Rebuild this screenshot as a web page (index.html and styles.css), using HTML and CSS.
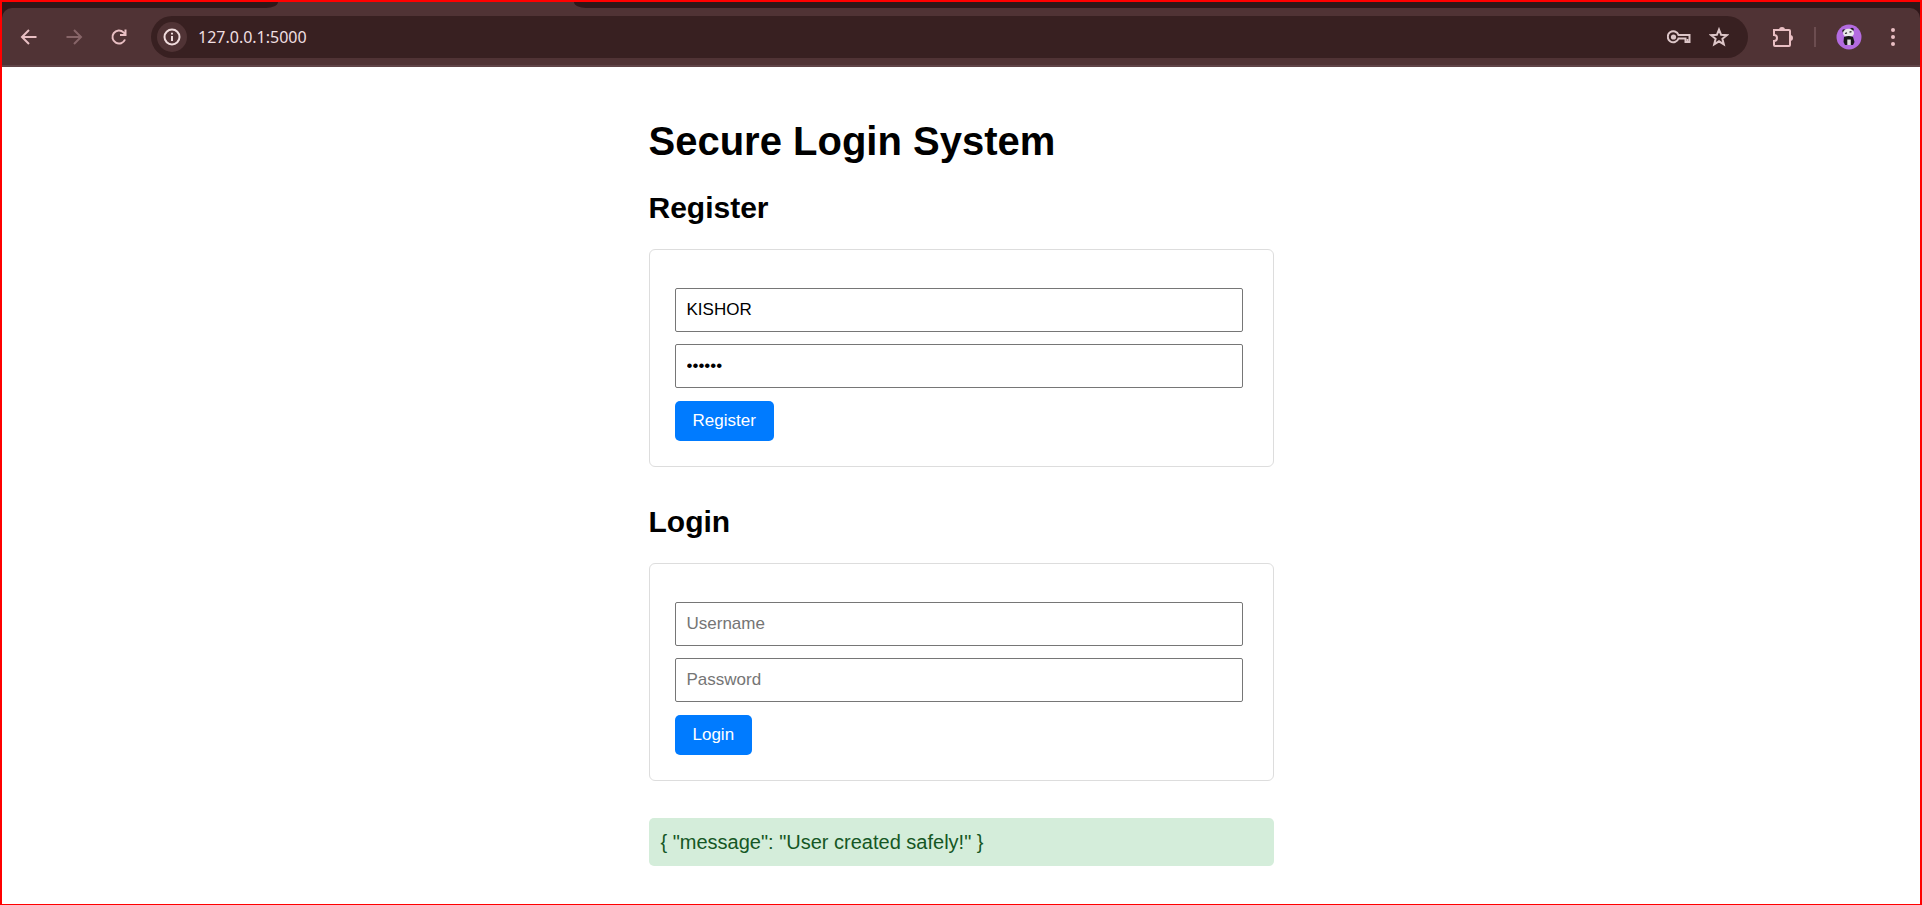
FILE: index.html
```html
<!DOCTYPE html>
<html lang="en">
<head>
<meta charset="utf-8">
<title>Secure Login System</title>
<link rel="stylesheet" href="styles.css">
</head>
<body>
<div class="window">
  <header class="browser">
    <div class="tabstrip">
      <div class="tabs-before"></div>
      <div class="tab-active"></div>
      <div class="tabs-after"></div>
    </div>
    <nav class="toolbar">
      <button class="tool" aria-label="Back"><svg width="18" height="18" viewBox="0 0 18 18"><path d="M16.500 9H2.500M9 2 2 9l7 7"/></svg></button>
      <button class="tool tool-dim" aria-label="Forward"><svg width="18" height="18" viewBox="0 0 18 18"><path d="M1.500 9h14M9 2l7 7-7 7"/></svg></button>
      <button class="tool" aria-label="Reload"><svg width="18" height="18" viewBox="0 0 18 18"><path d="M15 11.500A6.500 6.500 0 1 1 13.500 4.400L15.500 6.400M15.500 1.500V7H10"/></svg></button>
      <div class="omnibox">
        <button class="site-info" aria-label="View site information"><svg width="18" height="18" viewBox="0 0 18 18"><circle cx="9" cy="9" r="7.500"/><path d="M9 8v5M9 4.800v1.800"/></svg></button>
        <input class="url" aria-label="Address" value="127.0.0.1:5000">
        <button class="omni-action" aria-label="Passwords"><svg width="24" height="18" viewBox="0 0 24 18"><path d="M11.500 7H22.500v7h-4v-3.500h-7A5.500 5.500 0 1 1 11.500 7z"/><path d="M20.500 11v3"/><circle class="solid" cx="6.500" cy="9" r="2.600"/></svg></button>
        <button class="omni-action" aria-label="Bookmark"><svg width="20" height="20" viewBox="0 0 20 20"><path d="M10 2.500l2.100 5.300 5.700.4-4.400 3.600 1.400 5.500-4.800-3-4.800 3 1.400-5.500-4.400-3.600 5.700-.4z"/></svg></button>
      </div>
      <button class="tool extensions" aria-label="Extensions"><svg width="22" height="22" viewBox="0 0 22 22"><path d="M2 4h15a1 1 0 0 1 1 1v14a1 1 0 0 1-1 1H3a1 1 0 0 1-1-1v-4a3 3 0 0 0 0-6z"/><path class="solid" d="M7 4a3 3 0 0 1 6 0zM18 9a3 3 0 0 1 0 6z"/></svg></button>
      <span class="divider"></span>
      <button class="avatar" aria-label="Profile"><svg width="26" height="26" viewBox="0 0 26 26"><circle cx="13" cy="13" r="12.500" fill="#b36be0"/><circle cx="8" cy="7" r="1.800" fill="#222"/><circle cx="16" cy="5.500" r="1.800" fill="#222"/><ellipse cx="12.500" cy="9" rx="5.500" ry="4.300" fill="#e9e9e9"/><path d="M9 9.500l2-.700M13.500 8.200l2-.500" stroke="#222" stroke-width="1.300"/><path d="M8 13q5-2 9 0l1.500 5-1.500 3H9l-1.500-3z" fill="#171717"/><path d="M11.300 15.500h3.500V21h-3.500z" fill="#ddd"/></svg></button>
      <button class="tool menu" aria-label="Menu"><svg width="6" height="20" viewBox="0 0 6 20"><g class="solid"><circle cx="3" cy="3" r="2"/><circle cx="3" cy="10" r="2"/><circle cx="3" cy="17" r="2"/></g></svg></button>
    </nav>
  </header>
  <main class="page">
    <h1>Secure Login System</h1>
    <h2>Register</h2>
    <form class="card">
      <input type="text" aria-label="Username" placeholder="Username" value="KISHOR">
      <input type="password" aria-label="Password" placeholder="Password" value="secret">
      <button type="button">Register</button>
    </form>
    <h2>Login</h2>
    <form class="card">
      <input type="text" aria-label="Username" placeholder="Username">
      <input type="password" aria-label="Password" placeholder="Password">
      <button type="button">Login</button>
    </form>
    <div class="message" role="status">{ "message": "User created safely!" }</div>
  </main>
</div>
</body>
</html>
```
FILE: styles.css
```css
* { box-sizing: border-box; }
body { margin: 0; background: #fff; font-family: Arial, "Liberation Sans", sans-serif; }
.window { min-height: 100vh; border: 2px solid #f00; border-bottom-width: 1px; }

.browser { background: #2f1719; border-bottom: 2px solid #604447; }
.tabstrip { display: flex; height: 6px; background: #503335; }
.tabs-before { width: 276px; background: #2f1719; border-bottom-right-radius: 12px 6px; }
.tab-active { width: 296px; }
.tabs-after { flex: 1; background: #2f1719; border-bottom-left-radius: 12px 6px; }
.toolbar { display: flex; align-items: center; height: 57px; padding: 0 17px 0 18px; background: #503335; border-radius: 10px 10px 0 0; }
.browser button { display: flex; align-items: center; justify-content: center; padding: 0; border: 0; background: none; color: #e9bfc3; }
.browser svg { fill: none; stroke: currentColor; stroke-width: 2; }
.browser .solid { fill: currentColor; stroke: none; }
.tool { width: 18px; margin-right: 27px; }
.browser .tool-dim { color: #876568; }
.omnibox { flex: 1; display: flex; align-items: center; height: 42px; margin-left: -4px; padding: 0 19px 0 6px; border-radius: 21px; background: #382021; }
.browser .site-info { width: 30px; height: 30px; border-radius: 50%; background: #503335; color: #f0dcdd; }
.url { flex: 1; min-width: 0; margin-left: 11px; padding: 0; border: 0; outline: 0; background: none; color: #efdfe0; font: 16px/24px "Segoe UI", "Noto Sans", sans-serif; }
.browser .omni-action { margin-left: 18px; color: #dcc5c7; }
.extensions { width: 22px; margin: 0 20px 0 24px; }
.divider { width: 2px; height: 20px; background: #6c4d50; }
.browser .avatar { margin: 0 28px 0 20px; }
.avatar svg { stroke: none; }
.menu { width: 6px; margin-right: 7px; }

.page { width: 100%; max-width: 625px; margin: 51px auto 0; padding-bottom: 30px; }
h1 { margin: 0 0 26px; font-size: 40px; line-height: 46px; }
h2 { margin: 0 0 24px; font-size: 30px; line-height: 35px; }
.card { display: flex; flex-direction: column; align-items: flex-start; margin-bottom: 37px; padding: 38px 25px 25px; border: 1px solid #ddd; border-radius: 6px; }
.card input { width: calc(100% - 5px); height: 44px; margin-bottom: 12px; padding: 0 11px; border: 1px solid #767676; border-radius: 2px; background: #fff; color: #000; font: 17px Arial, "Liberation Sans", sans-serif; }
.card input::placeholder { color: #757575; }
.card button { height: 40px; margin-top: 1px; padding: 0 18px; border: 0; border-radius: 5px; background: #007bff; color: #fff; font: 17px Arial, "Liberation Sans", sans-serif; }
.message { padding: 12px; border-radius: 5px; background: #d4edda; color: #155724; font-size: 20px; line-height: 24px; }
```
